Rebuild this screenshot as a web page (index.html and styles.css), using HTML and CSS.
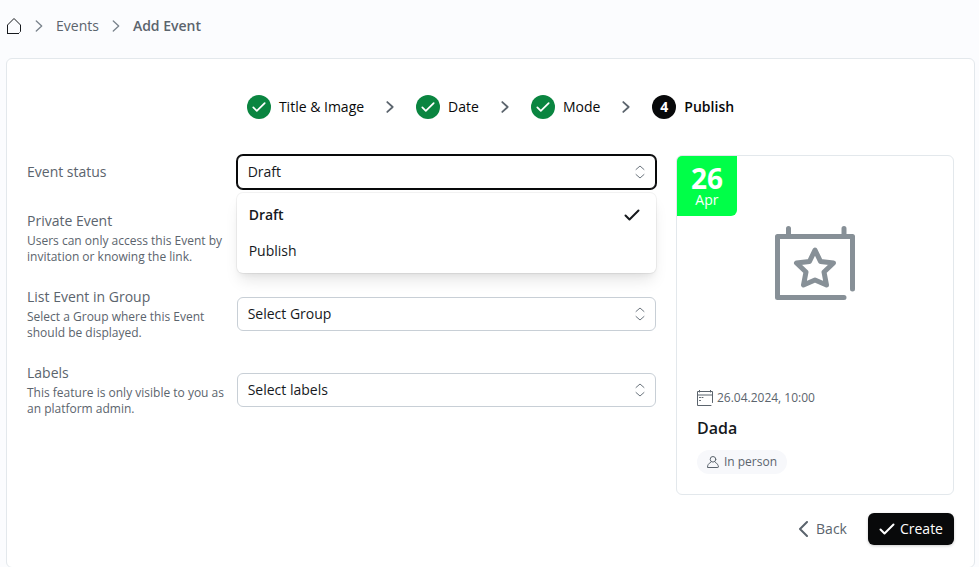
FILE: index.html
```html
<!DOCTYPE html>
<html lang="en">
<head>
<meta charset="utf-8">
<meta name="viewport" content="width=device-width, initial-scale=1">
<title>Add Event</title>
<link rel="stylesheet" href="styles.css">
</head>
<body>
<svg class="sprite" aria-hidden="true">
  <symbol id="chevron" viewBox="0 0 20 20"><path d="M7 4.500l6 5.500-6 5.500"/></symbol>
  <symbol id="check" viewBox="0 0 16 16"><path d="M1.500 8.500l4 4 9-9"/></symbol>
  <symbol id="sort" viewBox="0 0 10 14"><path d="M1 4.500L5 1l4 3.500M1 9.500L5 13l4-3.500"/></symbol>
</svg>

<nav class="breadcrumb" aria-label="Breadcrumb">
  <a href="#" aria-label="Home"><svg class="home" viewBox="0 0 16 18"><path d="M1.500 16.500V8L8 1.500 14.500 8v6.500l-1 1M1 16.500h12"/></svg></a>
  <svg class="icon-chevron"><use href="#chevron"/></svg>
  <a href="#">Events</a>
  <svg class="icon-chevron"><use href="#chevron"/></svg>
  <a href="#" class="current" aria-current="page">Add Event</a>
</nav>

<main class="panel">
  <ol class="steps">
    <li class="step"><span class="badge done"><svg class="badge-check"><use href="#check"/></svg></span>Title &amp; Image</li>
    <li class="divider"><svg class="icon-chevron"><use href="#chevron"/></svg></li>
    <li class="step"><span class="badge done"><svg class="badge-check"><use href="#check"/></svg></span>Date</li>
    <li class="divider"><svg class="icon-chevron"><use href="#chevron"/></svg></li>
    <li class="step"><span class="badge done"><svg class="badge-check"><use href="#check"/></svg></span>Mode</li>
    <li class="divider"><svg class="icon-chevron"><use href="#chevron"/></svg></li>
    <li class="step active" aria-current="step"><span class="badge">4</span>Publish</li>
  </ol>

  <div class="content">
    <form class="fields">
      <div class="field">
        <div><label class="name" for="status">Event status</label></div>
        <div class="control open">
          <select id="status"><option>Draft</option><option>Publish</option></select>
          <svg class="sort"><use href="#sort"/></svg>
          <ul class="menu" role="listbox" aria-label="Event status">
            <li class="option selected" role="option" aria-selected="true">Draft<svg class="tick"><use href="#check"/></svg></li>
            <li class="option" role="option" aria-selected="false">Publish</li>
          </ul>
        </div>
      </div>
      <div class="field">
        <div>
          <span class="name">Private Event</span>
          <p class="hint">Users can only access this Event by invitation or knowing the link.</p>
        </div>
      </div>
      <div class="field">
        <div>
          <label class="name" for="group">List Event in Group</label>
          <p class="hint">Select a Group where this Event should be displayed.</p>
        </div>
        <div class="control">
          <select id="group"><option>Select Group</option></select>
          <svg class="sort"><use href="#sort"/></svg>
        </div>
      </div>
      <div class="field">
        <div>
          <label class="name" for="labels">Labels</label>
          <p class="hint">This feature is only visible to you as an platform admin.</p>
        </div>
        <div class="control">
          <select id="labels"><option>Select labels</option></select>
          <svg class="sort"><use href="#sort"/></svg>
        </div>
      </div>
    </form>

    <article class="preview">
      <div class="media">
        <div class="date"><span class="day">26</span><span>Apr</span></div>
        <svg class="placeholder" viewBox="0 0 80 74"><path d="M77.500 63V10.500h-75v61H69M13.500 10V2.500M69 10V2.500M40 24l5.500 11.500 13 1.500-9.500 9 2.500 13L40 54l-11.500 5 2.500-13-9.500-9 13-1.500z"/></svg>
      </div>
      <div class="details">
        <div class="when"><svg class="calendar" viewBox="0 0 16 16"><path d="M15.500 12.500v-11H.5v14H14M.5 5h15M2.500 0v2M13.500 0v2"/><path d="M2.500 7.500h1M5 7.500h1M2.500 10.500h1"/></svg>26.04.2024, 10:00</div>
        <h2>Dada</h2>
        <span class="pill"><svg class="person" viewBox="0 0 12 12"><circle cx="6" cy="3.300" r="2.800"/><path d="M3.500 6.500C1.500 7.500.5 9 .5 11.500h10M8.500 6.500c1.600.8 2.700 2.200 3 4.500"/></svg>In person</span>
      </div>
    </article>
  </div>

  <div class="actions">
    <button type="button" class="back"><svg class="arrow" viewBox="0 0 10 16"><path d="M9 1L2 8l7 7"/></svg>Back</button>
    <button type="button" class="create"><svg class="tick"><use href="#check"/></svg>Create</button>
  </div>
</main>
</body>
</html>
```
FILE: styles.css
```css
* { box-sizing: border-box; }

body {
  margin: 0;
  padding: 0 4px 0 6px;
  background: #fbfcfe;
  color: #16191d;
  font: 14px/20px "Open Sans", "Noto Sans", sans-serif;
}

svg {
  display: block;
  flex: none;
  fill: none;
  stroke: currentColor;
  stroke-linecap: round;
  stroke-linejoin: round;
}

.sprite { position: absolute; width: 0; height: 0; }

ol, ul { list-style: none; margin: 0; padding: 0; }
p, h2 { margin: 0; }
a { color: inherit; text-decoration: none; }
button, select { font: inherit; color: inherit; }

.breadcrumb {
  display: flex;
  align-items: center;
  gap: 8px;
  height: 52px;
  margin-bottom: 6px;
  color: #5b646d;
}
.breadcrumb .current { font-weight: 600; }
.home { width: 16px; height: 18px; color: #16191d; stroke-linecap: butt; }
.icon-chevron { width: 18px; height: 18px; stroke-width: 1.5; color: #7a838c; }

.panel {
  padding: 36px 20px 22px;
  border: 1px solid #e3e8ec;
  border-radius: 6px;
  background: #fff;
}

.steps {
  display: flex;
  justify-content: center;
  align-items: center;
  gap: 17px;
  margin-bottom: 36px;
  color: #08090a;
}
.step { display: flex; align-items: center; gap: 8px; }
.active { font-weight: 600; }
.divider .icon-chevron { color: #5b646d; stroke-width: 2; }
.badge {
  display: grid;
  place-items: center;
  width: 24px;
  height: 24px;
  border-radius: 50%;
  background: #08090a;
  color: #fff;
  font-weight: 700;
}
.done { background: #0a8540; }
.badge-check { width: 14px; height: 14px; stroke-width: 2; }

.content {
  display: grid;
  grid-template-columns: minmax(0, 1fr) 30%;
  gap: 20px;
}

.fields { display: grid; align-content: start; gap: 22px; }
.field {
  display: grid;
  grid-template-columns: 1fr 2fr;
  align-items: center;
}
.name { display: block; color: #5b646d; }
.hint { margin-top: 2px; color: #5b646d; font-size: 12px; line-height: 16px; }

.control { position: relative; }
.control select {
  display: block;
  appearance: none;
  width: 100%;
  height: 34px;
  padding: 0 32px 0 10px;
  border: 1px solid #c8cfd6;
  border-radius: 6px;
  background: #fff;
}
.control.open select { border-color: #08090a; box-shadow: 0 0 0 1px #08090a; }
.sort {
  position: absolute;
  top: 10px;
  right: 11px;
  width: 10px;
  height: 14px;
  color: #6b747d;
  pointer-events: none;
}

.menu {
  position: absolute;
  z-index: 1;
  top: 100%;
  left: 0;
  right: 0;
  margin-top: 4px;
  padding: 4px 0;
  border-radius: 6px;
  background: #fff;
  box-shadow: 0 0 0 1px #0000000d, 0 10px 15px -3px #0000001a, 0 4px 6px -2px #0000000d;
}
.option {
  display: flex;
  align-items: center;
  justify-content: space-between;
  padding: 8px 16px 8px 12px;
}
.selected { font-weight: 600; }
.tick { width: 16px; height: 16px; stroke-width: 2; }

.preview {
  border: 1px solid #e3e8ec;
  border-radius: 6px;
  overflow: hidden;
}
.media {
  position: relative;
  display: grid;
  place-items: center;
  height: 214px;
}
.date {
  position: absolute;
  top: 0;
  left: 0;
  display: flex;
  flex-direction: column;
  align-items: center;
  justify-content: center;
  width: 60px;
  height: 60px;
  border-bottom-right-radius: 6px;
  background: #00ff48;
  color: #fff;
  font-weight: 500;
  line-height: 16px;
}
.day { font-size: 28px; line-height: 28px; font-weight: 700; }
.placeholder { width: 80px; height: 74px; color: #879097; stroke-width: 5; }

.details { padding: 18px 20px 20px; }
.when {
  display: flex;
  align-items: center;
  gap: 4px;
  color: #5b646d;
  font-size: 12px;
}
.calendar { width: 16px; height: 16px; }
.details h2 { margin: 8px 0 10px; font-size: 16px; line-height: 24px; font-weight: 600; }
.pill {
  display: inline-flex;
  align-items: center;
  gap: 5px;
  height: 24px;
  padding: 0 10px;
  border-radius: 12px;
  background: #f7f8fb;
  color: #5b646d;
  font-size: 12px;
  vertical-align: top;
}
.person { width: 12px; height: 12px; }

.actions {
  display: flex;
  justify-content: flex-end;
  gap: 12px;
  margin-top: 18px;
}
.actions button {
  display: flex;
  align-items: center;
  height: 32px;
  border: 0;
  border-radius: 6px;
}
.back { gap: 8px; padding: 0 9px; background: none; color: #5b646d; }
.arrow { width: 10px; height: 16px; stroke-width: 2; }
.create {
  gap: 5px;
  padding: 0 11px;
  background: #08090a;
  color: #fff;
  font-weight: 500;
  box-shadow: 0 1px 3px #00000033;
}
```
